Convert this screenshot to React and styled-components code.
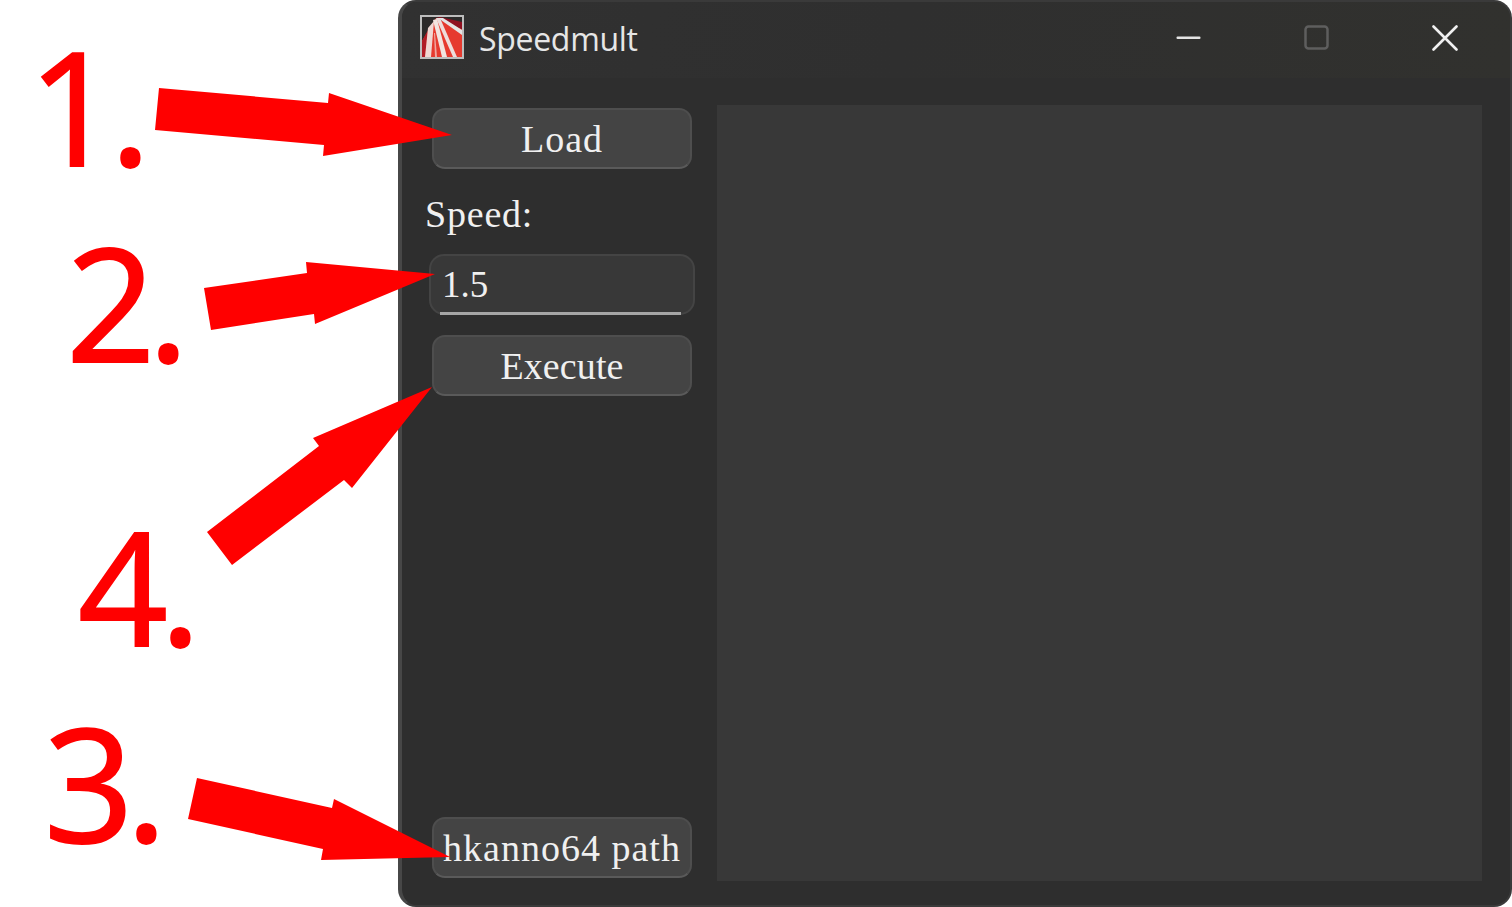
import React from "react";
import styled, { createGlobalStyle } from "styled-components";

const GlobalStyle = createGlobalStyle`
  html, body {
    margin: 0;
    padding: 0;
    background: #ffffff;
    overflow: hidden;
  }
`;

const Page = styled.div`
  position: relative;
  width: 1512px;
  height: 907px;
  display: flex;
  justify-content: flex-end;
  overflow: hidden;
  background: #ffffff;
`;

const Window = styled.div`
  box-sizing: border-box;
  width: 1114px;
  height: 907px;
  display: flex;
  flex-direction: column;
  background: #2e2e2e;
  border: 2px solid #3a3a3a;
  border-left: 4px solid #474747;
  border-radius: 18px;
`;

const TitleBar = styled.div`
  box-sizing: border-box;
  height: 76px;
  flex-shrink: 0;
  display: flex;
  align-items: center;
  padding: 0 0 4px 18px;
  background: linear-gradient(100deg, #313131 0%, #2f2f2f 45%, #31312e 100%);
  border-radius: 16px 16px 0 0;
`;

const AppTitle = styled.span`
  margin-left: 15px;
  flex: 1;
  font-family: "Open Sans", "Noto Sans", sans-serif;
  font-size: 32px;
  letter-spacing: -0.3px;
  color: #e6e6e6;
`;

const WindowButtons = styled.div`
  display: flex;
  align-items: center;
  margin-right: 1px;
`;

const WindowButton = styled.div`
  width: 128px;
  height: 40px;
  display: flex;
  align-items: center;
  justify-content: center;
`;

const Body = styled.div`
  flex: 1;
  min-height: 0;
  display: flex;
  gap: 22px;
  padding: 27px 28px 24px 27px;
`;

const Sidebar = styled.div`
  width: 266px;
  flex-shrink: 0;
  display: flex;
  flex-direction: column;
`;

const ActionButton = styled.button`
  box-sizing: border-box;
  width: 260px;
  height: 61px;
  margin: ${(p) => (p.$bottom ? "auto 3px 3px" : "3px 3px 0")};
  padding: 1px 0 0;
  background: #444444;
  border: 2px solid #4e4e4e;
  border-bottom-color: #5a5a5a;
  border-radius: 13px;
  color: #f0f0f0;
  font-family: "Liberation Serif", serif;
  font-size: 38px;
  letter-spacing: ${(p) => p.$track || 0}px;
  white-space: nowrap;
`;

const SpeedLabel = styled.label`
  margin: 21px 0 0 -4px;
  height: 65px;
  font-family: "Liberation Serif", serif;
  font-size: 38px;
  letter-spacing: 0.8px;
  line-height: 48px;
  color: #f0f0f0;
`;

const InputWrap = styled.div`
  position: relative;
  height: 61px;
  margin: -1px 0 17px;
`;

const SpeedInput = styled.input`
  box-sizing: border-box;
  width: 100%;
  height: 100%;
  padding: 0 11px;
  background: #383838;
  border: 2px solid #444444;
  border-radius: 15px;
  outline: none;
  color: #f0f0f0;
  font-family: "Liberation Serif", serif;
  font-size: 37px;
`;

const InputLine = styled.div`
  position: absolute;
  left: 11px;
  right: 14px;
  bottom: 0;
  height: 3px;
  background: #a6a6a6;
`;

const Canvas = styled.div`
  flex: 1;
  background: #383838;
`;

const Step = styled.span`
  position: absolute;
  left: ${(p) => p.$x}px;
  top: ${(p) => p.$y}px;
  padding-right: 16px;
  font-family: "Open Sans", "Noto Sans", sans-serif;
  font-size: 157px;
  font-weight: 400;
  letter-spacing: -8px;
  line-height: 157px;
  color: #ff0000;
  -webkit-text-stroke: 2px #ff0000;
`;

const Arrows = styled.svg`
  position: absolute;
  left: 0;
  top: 0;
  pointer-events: none;
`;

const IconFrame = styled.svg`
  flex-shrink: 0;
  margin-bottom: 2px;
`;

const AppIcon = () => (
  <IconFrame width="44" height="44" viewBox="0 0 44 44">
    <rect x="1" y="1" width="42" height="42" fill="#2c2a2a" stroke="#bdbdbd" strokeWidth="2" />
    <polygon points="2,26 16,3 42,14 42,42 2,42" fill="#e63a2f" />
    <polygon points="16,3 20,2 42,7 42,14" fill="#8f1020" />
    <polygon points="2,26 8,15 5,42 2,42" fill="#b01c26" />
    <polygon points="8,13 14,6 11,42 5,42" fill="#f0d8d4" />
    <polygon points="13,5 17,4 27,42 22,42" fill="#f2e4e0" />
    <polygon points="16,3 20,3 37,42 33,42" fill="#eedddb" />
    <polygon points="18,3 23,3 42,15 42,20" fill="#e4e4e4" />
    <polygon points="14,18 15,18 17,42 15,42" fill="#f0a8a0" />
  </IconFrame>
);

const App = () => {
  return (
    <Page>
      <GlobalStyle />
      <Window>
        <TitleBar>
          <AppIcon />
          <AppTitle>Speedmult</AppTitle>
          <WindowButtons>
            <WindowButton>
              <svg width="26" height="4" viewBox="0 0 26 4">
                <rect x="0.5" y="0.5" width="24" height="2.5" rx="1" fill="#e4e4e4" />
              </svg>
            </WindowButton>
            <WindowButton>
              <svg width="26" height="26" viewBox="0 0 26 26">
                <rect x="1.5" y="1.5" width="22" height="22" rx="3" fill="none" stroke="#5e5e5e" strokeWidth="2.5" />
              </svg>
            </WindowButton>
            <WindowButton>
              <svg width="26" height="26" viewBox="0 0 26 26">
                <path d="M1.5 1.5 L24.5 24.5 M24.5 1.5 L1.5 24.5" stroke="#f0f0f0" strokeWidth="2.6" strokeLinecap="round" />
              </svg>
            </WindowButton>
          </WindowButtons>
        </TitleBar>
        <Body>
          <Sidebar>
            <ActionButton $track={1}>Load</ActionButton>
            <SpeedLabel>Speed:</SpeedLabel>
            <InputWrap>
              <SpeedInput defaultValue="1.5" />
              <InputLine />
            </InputWrap>
            <ActionButton $track={0.1}>Execute</ActionButton>
            <ActionButton $bottom $track={1}>hkanno64 path</ActionButton>
          </Sidebar>
          <Canvas />
        </Body>
      </Window>

      <Step $x={28} $y={27}>1.</Step>
      <Step $x={66} $y={223}>2.</Step>
      <Step $x={78} $y={507}>4.</Step>
      <Step $x={44} $y={703}>3.</Step>
      <Arrows width="1512" height="907" viewBox="0 0 1512 907">
        <polygon fill="#ff0000" points="159,88 328,103 329,93 452,135 323,156 324,145 155,130" />
        <polygon fill="#ff0000" points="204,288 307,273 306,262 435,274 315,324 314,314 211,330" />
        <polygon fill="#ff0000" points="207,532 319,446 313,438 432,387 352,488 344,480 232,565" />
        <polygon fill="#ff0000" points="197,778 332,808 334,799 450,857 321,860 323,849 188,819" />
      </Arrows>
    </Page>
  );
};

export default App;
